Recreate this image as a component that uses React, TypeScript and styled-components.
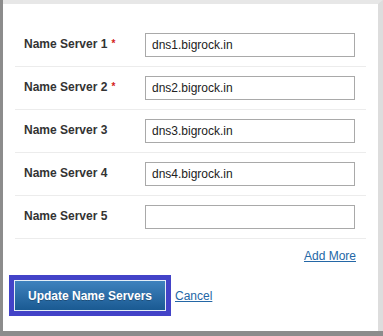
import React from "react";
import styled, { createGlobalStyle } from "styled-components";

const GlobalStyle = createGlobalStyle`
  html, body {
    margin: 0;
    padding: 0;
    background: #8c8c8c;
  }
  body {
    font-family: "Liberation Sans", Arial, sans-serif;
  }
`;

const Backdrop = styled.div`
  width: 383px;
  height: 336px;
  box-sizing: border-box;
  padding: 0 0 5px 3px;
  background: #8c8c8c;
  display: flex;
`;

const Dialog = styled.div`
  flex: 1;
  box-sizing: border-box;
  background: #fff;
  border-top: 4px solid #e7e7e7;
  border-right: 5px solid #dddddd;
  padding-top: 20px;
  display: flex;
  flex-direction: column;
`;

const Form = styled.div`
  padding: 0 12px;
  display: flex;
  flex-direction: column;
`;

const Row = styled.div`
  display: flex;
  align-items: center;
  height: 42px;
  box-sizing: content-box;
  border-bottom: 1px solid #ececec;
  padding: 0 9px;
`;

const Label = styled.label`
  width: 121px;
  font-size: 12px;
  font-weight: bold;
  color: #333;
  margin-top: -2px;
`;

const Required = styled.span`
  color: #d42020;
  font-size: 10px;
  position: relative;
  top: -1px;
  margin-left: 4px;
`;

const Input = styled.input`
  width: 210px;
  height: 24px;
  box-sizing: border-box;
  border: 1px solid #a9a9a9;
  padding: 0 6px;
  margin: 0;
  font-family: "Liberation Sans", Arial, sans-serif;
  font-size: 12px;
  color: #222;
  outline: none;
`;

const MoreRow = styled.div`
  display: flex;
  justify-content: flex-end;
  padding: 10px 10px 0 0;
  height: 31px;
`;

const Link = styled.a`
  font-size: 12px;
  color: #2467a6;
  text-decoration: underline;
  cursor: pointer;
  line-height: 14px;
`;

const Footer = styled.div`
  display: flex;
  align-items: center;
  padding: 0 11px;
  gap: 9px;
`;

const PrimaryButton = styled.button`
  height: 31px;
  width: 152px;
  box-sizing: border-box;
  border: 1px solid #e4eef7;
  background: linear-gradient(#3f82be, #1a5a92);
  color: #fff;
  font-family: "Liberation Sans", Arial, sans-serif;
  font-size: 12px;
  font-weight: bold;
  text-shadow: 0 1px 0 rgba(0, 0, 0, 0.25);
  padding: 0;
  outline: 5px solid #4343c8;
  cursor: pointer;
`;

const servers = [
  { label: "Name Server 1", value: "dns1.bigrock.in", required: true },
  { label: "Name Server 2", value: "dns2.bigrock.in", required: true },
  { label: "Name Server 3", value: "dns3.bigrock.in", required: false },
  { label: "Name Server 4", value: "dns4.bigrock.in", required: false },
  { label: "Name Server 5", value: "", required: false },
];

export default function App() {
  return (
    <>
      <GlobalStyle />
      <Backdrop>
        <Dialog>
          <Form>
            {servers.map((s) => (
              <Row key={s.label}>
                <Label>
                  {s.label}
                  {s.required && <Required>*</Required>}
                </Label>
                <Input defaultValue={s.value} />
              </Row>
            ))}
            <MoreRow>
              <Link>Add More</Link>
            </MoreRow>
          </Form>
          <Footer>
            <PrimaryButton>Update Name Servers</PrimaryButton>
            <Link>Cancel</Link>
          </Footer>
        </Dialog>
      </Backdrop>
    </>
  );
}
